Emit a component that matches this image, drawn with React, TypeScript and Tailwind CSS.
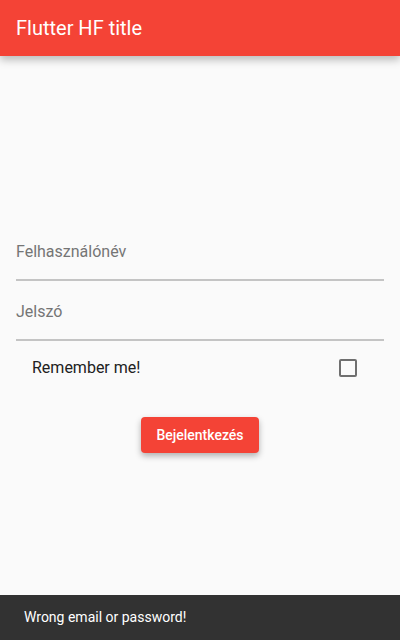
const Field: React.FC<{ label: string }> = ({ label }) => {
    return (
        <div className="h-[60px] border-b-2 border-[#c4c4c4] pt-[19px]">
            <span className="text-[16px] leading-[24px] text-[#757575]">{label}</span>
        </div>
    );
};

export default function App() {
    return (
        <div
            className="flex flex-col h-[640px] w-[400px] bg-[#fafafa] overflow-hidden"
            style={{ fontFamily: "Roboto, 'Liberation Sans', sans-serif" }}
        >
            <header className="relative z-10 h-[56px] shrink-0 bg-[#f44336] px-4 flex items-center shadow-[0_4px_8px_rgba(0,0,0,0.25)]">
                <h1 className="text-[20px] text-white font-normal">Flutter HF title</h1>
            </header>

            <main className="flex-grow px-4 pt-[165px]">
                <Field label="Felhasználónév" />
                <Field label="Jelszó" />

                <div className="flex items-center justify-between h-[54px] pl-4 pr-[27px]">
                    <span className="text-[16px] text-[#212121]">Remember me!</span>
                    <span className="w-[18px] h-[18px] border-2 border-[#6f6f6f] rounded-[2px]" />
                </div>

                <div className="flex justify-center pt-[22px]">
                    <button className="h-[36px] w-[118px] rounded-[4px] bg-[#f44336] text-white text-[14px] font-medium shadow-[0_3px_6px_rgba(0,0,0,0.3)]">
                        Bejelentkezés
                    </button>
                </div>
            </main>

            <footer className="h-[45px] shrink-0 bg-[#323232] flex items-center px-6">
                <span className="text-[14px] text-white">Wrong email or password!</span>
            </footer>
        </div>
    );
}
